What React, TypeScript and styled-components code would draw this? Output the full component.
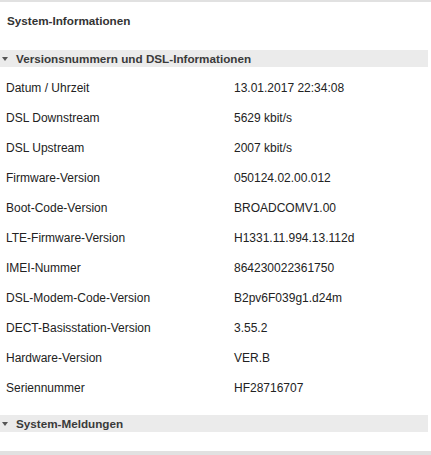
import styled, { createGlobalStyle } from 'styled-components';

const GlobalStyle = createGlobalStyle`
  html, body {
    margin: 0;
    padding: 0;
    background: #fff;
  }
  body {
    font-family: "Liberation Sans", Arial, sans-serif;
    font-size: 12px;
    color: #222;
  }
`;

const Page = styled.div`
  width: 431px;
  border-top: 2px solid #e1e1e1;
`;

const Title = styled.h1`
  margin: 0;
  height: 48px;
  box-sizing: border-box;
  padding: 12px 0 0 7px;
  font-size: 11.7px;
  line-height: 14px;
  font-weight: bold;
  color: #333;
`;

const SectionHeader = styled.div<{ $gap?: number }>`
  display: flex;
  align-items: center;
  height: 17px;
  margin: ${(p) => p.$gap ?? 0}px 3px 0 0;
  background: #ebebeb;
  font-size: 11.7px;
  font-weight: bold;
  color: #3a3a3a;
`;

const Arrow = styled.span`
  width: 0;
  height: 0;
  margin: 1px 8px 0 2px;
  border-left: 3px solid transparent;
  border-right: 3px solid transparent;
  border-top: 4px solid #555;
`;

const InfoList = styled.div`
  display: flex;
  flex-direction: column;
  margin-top: 6px;
`;

const InfoRow = styled.div`
  display: grid;
  grid-template-columns: 228px 1fr;
  align-items: center;
  height: 30px;
  padding-left: 6px;
  line-height: 14px;
`;

const BottomBar = styled.div`
  height: 4px;
  margin-top: 19px;
  background: #e1e1e1;
`;

const rows: [string, string][] = [
  ['Datum / Uhrzeit', '13.01.2017 22:34:08'],
  ['DSL Downstream', '5629 kbit/s'],
  ['DSL Upstream', '2007 kbit/s'],
  ['Firmware-Version', '050124.02.00.012'],
  ['Boot-Code-Version', 'BROADCOMV1.00'],
  ['LTE-Firmware-Version', 'H1331.11.994.13.112d'],
  ['IMEI-Nummer', '864230022361750'],
  ['DSL-Modem-Code-Version', 'B2pv6F039g1.d24m'],
  ['DECT-Basisstation-Version', '3.55.2'],
  ['Hardware-Version', 'VER.B'],
  ['Seriennummer', 'HF28716707'],
];

export default function App() {
  return (
    <>
      <GlobalStyle />
      <Page>
        <Title>System-Informationen</Title>
        <SectionHeader>
          <Arrow />
          Versionsnummern und DSL-Informationen
        </SectionHeader>
        <InfoList>
          {rows.map(([label, value]) => (
            <InfoRow key={label}>
              <span>{label}</span>
              <span>{value}</span>
            </InfoRow>
          ))}
        </InfoList>
        <SectionHeader $gap={12}>
          <Arrow />
          System-Meldungen
        </SectionHeader>
        <BottomBar />
      </Page>
    </>
  );
}
